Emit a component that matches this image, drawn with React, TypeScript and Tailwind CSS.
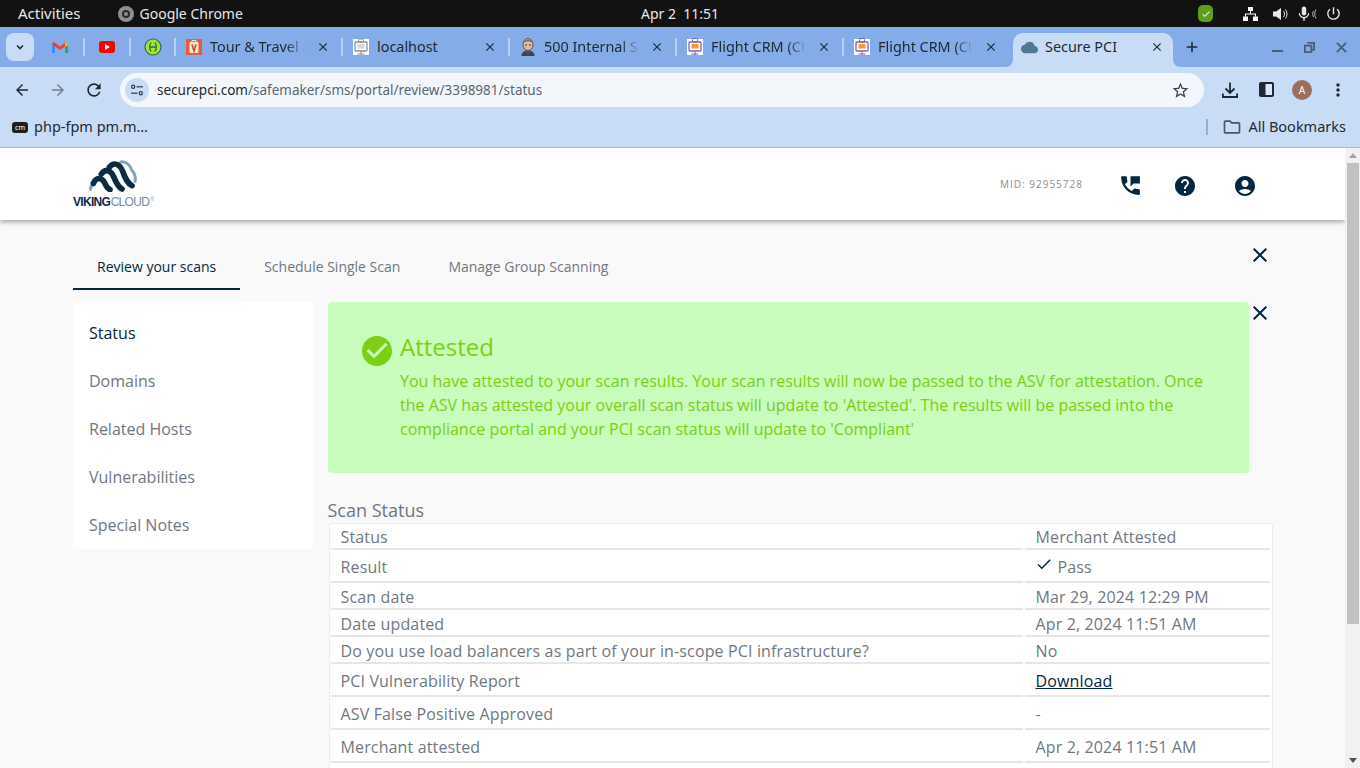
import React from 'react';
import { MdPermPhoneMsg, MdHelp, MdAccountCircle, MdClose, MdCheck, MdCheckCircle, MdArrowBack, MdArrowForward, MdRefresh, MdMoreVert, MdAdd, MdOutlineFolder, MdStarBorder, MdMic, MdPowerSettingsNew, MdCloud } from 'react-icons/md';

const ui = 'font-["Noto_Sans",sans-serif]';

function Sep() {
  return <div className="w-[2px] h-[18px] bg-[#bcd0ee] shrink-0" />;
}

function Slides() {
  return (
    <svg width="16" height="18" viewBox="0 0 16 18" className="shrink-0">
      <rect x="0" y="1" width="16" height="16" fill="#fff" />
      <rect x="5.5" y="0.5" width="5" height="3.5" rx="1" fill="none" stroke="#7a62b8" strokeWidth="1" />
      <rect x="2" y="4" width="12" height="9" rx="1" fill="none" stroke="#7a62b8" strokeWidth="1.3" />
      <rect x="4.5" y="6" width="7" height="4.5" fill="#f59a23" />
      <path d="M8 13V17M4.5 16H11.5" stroke="#7a62b8" strokeWidth="1" />
    </svg>
  );
}

function LocalIcon() {
  return (
    <svg width="16" height="18" viewBox="0 0 16 18" className="shrink-0">
      <rect x="0" y="1" width="16" height="16" fill="#fff" />
      <rect x="5.5" y="1" width="5" height="3" rx="1" fill="none" stroke="#8a9096" strokeWidth="1" />
      <rect x="2" y="4" width="12" height="9" rx="1" fill="none" stroke="#8a9096" strokeWidth="1.3" />
      <rect x="4.5" y="6" width="7" height="4.5" fill="#d5d8da" />
      <path d="M8 13V17M4.5 16H11.5" stroke="#8a9096" strokeWidth="1" />
    </svg>
  );
}

function Jenkins() {
  return (
    <svg width="16" height="18" viewBox="0 0 16 18" className="shrink-0">
      <ellipse cx="8" cy="6.5" rx="5" ry="6" fill="#e0bda6" stroke="#4a3a34" strokeWidth="0.8" />
      <path d="M3.2 5C4 0.5 12 0 12.8 5C10 3 6 3 3.2 5Z" fill="#777270" />
      <path d="M1.5 18c0-4 3-5.5 6.5-5.5s6.5 1.5 6.5 5.5z" fill="#3c4650" />
      <path d="M6 13l2 1 2-1v2.2l-2-1-2 1z" fill="#c0392b" />
      <circle cx="6" cy="7" r="0.8" fill="#222" />
      <circle cx="10" cy="7" r="0.8" fill="#222" />
    </svg>
  );
}

function Tour() {
  return (
    <svg width="16" height="18" viewBox="0 0 16 18" className="shrink-0">
      <rect x="0" y="1" width="16" height="16" fill="#e0603c" />
      <rect x="3.5" y="4" width="9" height="11" rx="1" fill="#f6e4d8" />
      <path d="M6 4V2.5h4V4" fill="none" stroke="#f6e4d8" />
      <path d="M6 6.5L8 13l2-6.5" fill="none" stroke="#d9482b" strokeWidth="1.6" />
    </svg>
  );
}

function Tab({ icon, title, fade = true }: { icon: React.ReactNode; title: string; fade?: boolean }) {
  return (
    <div className="w-[165px] h-[34px] shrink-0 flex items-center pl-[10px] pr-[11px] gap-[8px]">
      {icon}
      <span className={`flex-1 overflow-hidden whitespace-nowrap text-[14.4px] text-[#222a33] ${fade ? '[mask-image:linear-gradient(to_right,black_78%,transparent_97%)]' : ''}`}>
        {title}
      </span>
      <MdClose size={14} className="text-[#1f2933] shrink-0" />
    </div>
  );
}

function ChromeUI() {
  return (
    <div className={`${ui} shrink-0`}>
      {/* GNOME top bar */}
      <div className="h-[27px] bg-[#121212] flex items-center text-[14px] text-[#e8e8e8] pl-[18px] relative">
        <span className="text-[15px]">Activities</span>
        <span className="ml-[37px] flex items-center gap-[6px]">
          <span className="w-[16px] h-[16px] rounded-full bg-[#8e8e8e] flex items-center justify-center">
            <span className="w-[8px] h-[8px] rounded-full border-2 border-[#2a2a2a]" />
          </span>
          Google Chrome
        </span>
        <span className="absolute left-[641px] top-[3px]">Apr 2&nbsp;&nbsp;11:51</span>
        <div className="ml-auto flex items-center pr-[18px]">
          <span className="w-[15px] h-[17px] rounded-[5px] bg-[#5f9e17] flex items-center justify-center mr-[30px]">
            <MdCheck size={10} className="text-white" />
          </span>
          <svg width="15" height="14" viewBox="0 0 15 14" className="mr-[15px]" fill="#fff">
            <rect x="5" y="0" width="5" height="4" />
            <rect x="0" y="9.5" width="5" height="4.5" />
            <rect x="10" y="9.5" width="5" height="4.5" />
            <path d="M7 4h1v2.500h5V9.500h-1V7.500H3v2H2V6.500h5z" />
          </svg>
          <svg width="15" height="14" viewBox="0 0 15 14" className="mr-[7px]" fill="none">
            <path d="M0 4.500h3L8 1v12L3 9.500H0z" fill="#e8e8e8" />
            <path d="M10.500 4C11.800 5.500 11.800 8.500 10.500 10M12.500 2.500C14.500 5 14.500 9 12.500 11.500" stroke="#e8e8e8" strokeWidth="1" />
          </svg>
          <MdMic size={18} className="text-[#e8e8e8] -mr-[2px]" />
          <svg width="6" height="10" viewBox="0 0 6 10" fill="none" className="mr-[8px]">
            <path d="M2.500 2C1.500 3.500 1.500 6.500 2.500 8M5 0.500C3.300 3 3.300 7 5 9.500" stroke="#c8c8c8" strokeWidth="0.9" />
          </svg>
          <MdPowerSettingsNew size={17} className="text-[#e8e8e8]" />
        </div>
      </div>
      {/* Tab strip */}
      <div className="h-[40px] bg-[#83ace8] flex items-end pl-[6px] relative">
        <div className="w-[28px] h-[28px] mb-[6px] rounded-[8px] bg-[#c9dcf6] flex items-center justify-center mr-[18px]">
          <svg width="10" height="10" viewBox="0 0 10 10"><path d="M2 3.500L5 6.500L8 3.500" fill="none" stroke="#1f2933" strokeWidth="1.6" /></svg>
        </div>
        <div className="flex items-center h-[34px]">
          <div className="w-[16px] flex justify-center mr-[15px] -mt-[6px]">
            <svg width="16" height="13" viewBox="0 0 16 13">
              <path d="M0 2.500V12h3V5.500L8 9l5-3.500V12h3V2.500L14 1 8 5.500 2 1z" fill="#ea4335" />
              <path d="M0 3v9h3V5.500z" fill="#4285f4" />
              <path d="M13 5.500V12h3V3z" fill="#34a853" />
              <path d="M13 2.500L14 1l2 1.500V4l-3 2z" fill="#fbbc04" />
            </svg>
          </div>
          <div className="-mt-[6px]"><Sep /></div>
          <div className="w-[44px] flex justify-center -mt-[6px]">
            <div className="w-[16px] h-[12px] rounded-[3px] bg-[#f00] flex items-center justify-center">
              <span className="w-0 h-0 border-y-[3px] border-y-transparent border-l-[5px] border-l-white" />
            </div>
          </div>
          <div className="-mt-[6px]"><Sep /></div>
          <div className="w-[43px] flex justify-center -mt-[6px]">
            <svg width="18" height="18" viewBox="0 0 18 18">
              <circle cx="9" cy="9" r="8" fill="#a6e22e" stroke="#2f6f5a" strokeWidth="1.2" />
              <path d="M7 4.500C5.500 7 5.500 11 7 13.500M11 4.500C12.500 7 12.500 11 11 13.500M6 9H12" fill="none" stroke="#1e7a34" strokeWidth="1.3" />
            </svg>
          </div>
          <div className="-mt-[6px] flex items-center">
            <Sep />
            <Tab icon={<Tour />} title="Tour & Travel Admin" />
            <Sep />
            <Tab icon={<LocalIcon />} title="localhost" fade={false} />
            <Sep />
            <Tab icon={<Jenkins />} title="500 Internal Server" />
            <Sep />
            <Tab icon={<Slides />} title="Flight CRM (CU)" />
            <Sep />
            <Tab icon={<Slides />} title="Flight CRM (CU)" />
          </div>
          <div className="w-[4px]" />
          <div className="relative w-[160px] h-[34px] bg-[#c9dcf6] rounded-t-[10px] flex items-center pl-[8px] pr-[9px] gap-[7px] pb-[6px]">
            <svg width="8" height="8" viewBox="0 0 8 8" className="absolute left-[-8px] bottom-0"><path d="M8 0V8H0C5 8 8 5 8 0Z" fill="#c9dcf6" /></svg>
            <svg width="8" height="8" viewBox="0 0 8 8" className="absolute right-[-8px] bottom-0"><path d="M0 0V8H8C3 8 0 5 0 0Z" fill="#c9dcf6" /></svg>
            <MdCloud size={17} className="text-[#4f7a96] shrink-0" />
            <span className="flex-1 text-[14.4px] text-[#222a33] whitespace-nowrap">Secure PCI</span>
            <MdClose size={14} className="text-[#1f2933] shrink-0" />
          </div>
          <MdAdd size={18} className="ml-[10px] -mt-[6px] text-[#1f2933]" />
        </div>
        <div className="absolute right-[13px] top-[15px] flex items-start gap-[21px]">
          <div className="w-[11px] h-[2px] bg-[#4c5e78] mt-[8px]" />
          <svg width="11" height="11" viewBox="0 0 12 12"><path d="M3.500 1h7.500v7.500h-2.500M1 4h7v7H1z" fill="none" stroke="#4c5e78" strokeWidth="2" /></svg>
          <svg width="11" height="11" viewBox="0 0 12 12"><path d="M1 1L11 11M11 1L1 11" stroke="#4c5e78" strokeWidth="2" /></svg>
        </div>
      </div>
      {/* Toolbar */}
      <div className="h-[43px] bg-[#c9dcf6] flex items-start pt-[6px] pl-[13px]">
        <MdArrowBack size={18} className="text-[#1f2933] mt-[8px]" />
        <MdArrowForward size={18} className="text-[#6f7f94] ml-[18px] mt-[8px]" />
        <MdRefresh size={20} className="text-[#1f2933] ml-[17px] mt-[7px]" />
        <div className="ml-[16px] w-[1084px] h-[34px] rounded-full bg-[#f3f7fc] flex items-center pl-[5px] pr-[14px]">
          <div className="w-[24px] h-[24px] rounded-full bg-[#c9dcf6] flex items-center justify-center">
            <svg width="14" height="12" viewBox="0 0 14 12" fill="none" stroke="#2f3b46" strokeWidth="1.2">
              <circle cx="3.200" cy="2.800" r="1.600" /><path d="M6.500 2.800H13" />
              <circle cx="10.800" cy="9.200" r="1.600" /><path d="M1 9.200H7.500" />
            </svg>
          </div>
          <span className="ml-[8px] text-[13.5px] text-[#1f2933]">securepci.com<span className="text-[#5b6672]">/safemaker/sms/portal/review/3398981/status</span></span>
          <MdStarBorder size={19} className="ml-auto text-[#3a434c]" />
        </div>
        <svg width="16" height="16" viewBox="0 0 16 16" className="ml-[18px] mt-[9px]" fill="none" stroke="#1f2933" strokeWidth="1.800">
          <path d="M8 0.500V10.500M3.500 6.500L8 11L12.500 6.500" />
          <path d="M0.900 11.500V15H15.100V11.500" />
        </svg>
        <svg width="15" height="15" viewBox="0 0 15 15" className="ml-[21px] mt-[9px]"><rect x="0" y="0" width="15" height="15" rx="2" fill="#1f2933" /><rect x="6.500" y="2" width="6.500" height="11" fill="#dbe7f8" /></svg>
        <div className="ml-[18px] mt-[7px] w-[20px] h-[20px] rounded-full bg-[#99705f] text-white text-[10px] flex items-center justify-center">A</div>
        <MdMoreVert size={20} className="ml-[16px] mt-[7px] text-[#1f2933]" />
      </div>
      {/* Bookmarks */}
      <div className="h-[38px] bg-[#c9dcf6] border-b border-[#a8b6c8] flex items-center pb-[3px] pl-[12px] pr-[14px]">
        <span className="w-[16px] h-[11px] rounded-[3px] bg-[#1f1f1f] text-white text-[7px] leading-[11px] text-center">cm</span>
        <span className="ml-[6px] text-[14.5px] text-[#222a33]">php-fpm pm.m…</span>
        <div className="ml-auto w-[2px] h-[16px] bg-[#8fb0dd]" />
        <MdOutlineFolder size={20} className="ml-[14px] text-[#4c5560]" />
        <span className="ml-[6px] text-[14.5px] text-[#222a33]">All Bookmarks</span>
      </div>
    </div>
  );
}

function Logo() {
  return (
    <div className="w-[80px] flex flex-col items-start mt-[-1px]">
      <svg width="50" height="32" viewBox="50 8 150 96" className="ml-[15px]">
        <g fill="none" strokeLinecap="round">
          <path d="M58 96C58 88 60 84 66 80" stroke="#7ea3b8" strokeWidth="9" />
          <path d="M148 14C165 11 178 26 182 40C189 46 194 60 191 72" stroke="#7ea3b8" strokeWidth="9" />
          <path d="M66 78C74 58 92 60 100 76S108 92 116 97" stroke="#0d2b45" strokeWidth="17" />
          <path d="M90 50C102 32 120 40 128 60S142 90 152 95" stroke="#0d2b45" strokeWidth="17" />
          <path d="M114 30C128 12 146 20 154 42S168 78 182 85" stroke="#0d2b45" strokeWidth="17" />
        </g>
      </svg>
      <div className='font-["Liberation_Sans",sans-serif] text-[12px] leading-[12px] whitespace-nowrap tracking-[-0.7px] mt-[4px] flex items-start'>
        <span className="font-bold text-[#0d2b45]">VIKING</span>
        <span className="text-[#6d8ea3] ml-[0.5px]">CLOUD</span>
        <span className="text-[#6d8ea3] text-[5px] leading-[6px] tracking-normal ml-[1px]">®</span>
      </div>
    </div>
  );
}

const rows: [string, React.ReactNode, string][] = [
  ['Status', 'Merchant Attested', 'h-[26px]'],
  ['Result', <span className="flex items-center"><MdCheck size={18} className="text-[#012840] mr-[5px] -mt-[5px] -ml-[1px]" />Pass</span>, 'h-[33px]'],
  ['Scan date', 'Mar 29, 2024 12:29 PM', 'h-[27px]'],
  ['Date updated', 'Apr 2, 2024 11:51 AM', 'h-[27px]'],
  ['Do you use load balancers as part of your in-scope PCI infrastructure?', 'No', 'h-[27px]'],
  ['PCI Vulnerability Report', <a className="text-[#012840] underline">Download</a>, 'h-[33px]'],
  ['ASV False Positive Approved', '-', 'h-[33px]'],
  ['Merchant attested', 'Apr 2, 2024 11:51 AM', 'h-[33px]'],
];

function Page() {
  return (
    <div className='flex-1 min-h-0 flex bg-[#f9f9f9] font-["Open_Sans",sans-serif] text-[#6f7880]'>
      <div className="flex-1 min-w-0 relative overflow-hidden">
        <header className="h-[72px] bg-white shadow-[0_2px_5px_rgba(0,0,0,0.35)] flex items-center pl-[73px] relative">
          <Logo />
          <span className="ml-auto text-[10px] tracking-[1px] text-[#8a8f94]">MID: 92955728</span>
          <MdPermPhoneMsg size={25} className="ml-[35px] mt-[3px] text-[#012840]" />
          <MdHelp size={24} className="ml-[30px] mt-[3px] text-[#012840]" />
          <MdAccountCircle size={24} className="ml-[36px] mt-[3px] mr-[88px] text-[#012840]" />
        </header>
        <MdClose size={24} className="absolute left-[1248px] top-[95px] text-[#012840]" />
        <MdClose size={24} className="absolute left-[1248px] top-[153px] text-[#012840]" />
        <nav className="flex ml-[73px] mt-[24px] h-[46px] text-[14px]">
          <div className="px-[24px] flex items-center text-[#012840] border-b-2 border-[#012840]">Review your scans</div>
          <div className="px-[24px] flex items-center border-b-2 border-transparent">Schedule Single Scan</div>
          <div className="px-[24px] flex items-center border-b-2 border-transparent">Manage Group Scanning</div>
        </nav>
        <div className="flex ml-[73px] mt-[11px] items-start">
          <aside className="w-[240px] bg-white shrink-0 text-[16px] pt-[8px]">
            {['Status', 'Domains', 'Related Hosts', 'Vulnerabilities', 'Special Notes'].map((t, i) => (
              <div key={t} className={`h-[48px] flex items-center pl-[16px] ${i === 0 ? 'text-[#012840]' : ''}`}>{t}</div>
            ))}
          </aside>
          <div className="ml-[15px] w-[945px]">
            <div className="w-[921px] h-[171px] mt-[1px] rounded-[4px] bg-[#c8fdbd] flex pl-[31px] text-[#7bcf14]">
              <MdCheckCircle size={36} className="text-[#7bcf14] mt-[31px] shrink-0" />
              <div className="ml-[5px] pt-[27px] w-[820px]">
                <div className="text-[24px] leading-[36px]">Attested</div>
                <p className="text-[16px] leading-[24px] mt-[4px]">You have attested to your scan results. Your scan results will now be passed to the ASV for attestation. Once the ASV has attested your overall scan status will update to 'Attested'. The results will be passed into the compliance portal and your PCI scan status will update to 'Compliant'</p>
              </div>
            </div>
            <h2 className="mt-[25px] -ml-[0.5px] text-[18px] leading-[24px]">Scan Status</h2>
            <div className="ml-[1px] mt-[1px] bg-white border border-[#ececec] rounded-[3px] px-[1px] grid grid-cols-[692px_245px] gap-x-[2px] text-[16px] tracking-[0.14px]">
              {rows.map(([k, v, h]) => (
                <React.Fragment key={k}>
                  <div className={`${h} flex items-center pt-[2px] pl-[9.5px] border-b-2 border-[#e6e6e6]`}>{k}</div>
                  <div className={`${h} flex items-center pt-[2px] pl-[10.5px] border-b-2 border-[#e6e6e6]`}>{v}</div>
                </React.Fragment>
              ))}
              <div className="h-[27px]" />
              <div className="h-[27px]" />
            </div>
          </div>
        </div>
      </div>
      {/* Scrollbar */}
      <div className="w-[15px] shrink-0 bg-[#f1f1f1] flex flex-col items-center">
        <span className="mt-[5px] w-0 h-0 border-x-[4px] border-x-transparent border-b-[5px] border-b-[#a3a3a3]" />
        <div className="mt-[5px] w-[12px] h-[461px] bg-[#c1c1c1]" />
        <span className="mt-auto mb-[5px] w-0 h-0 border-x-[4px] border-x-transparent border-t-[5px] border-t-[#505050]" />
      </div>
    </div>
  );
}

export default function App() {
  return (
    <div className="w-[1360px] h-[768px] overflow-hidden flex flex-col">
      <ChromeUI />
      <Page />
    </div>
  );
}
